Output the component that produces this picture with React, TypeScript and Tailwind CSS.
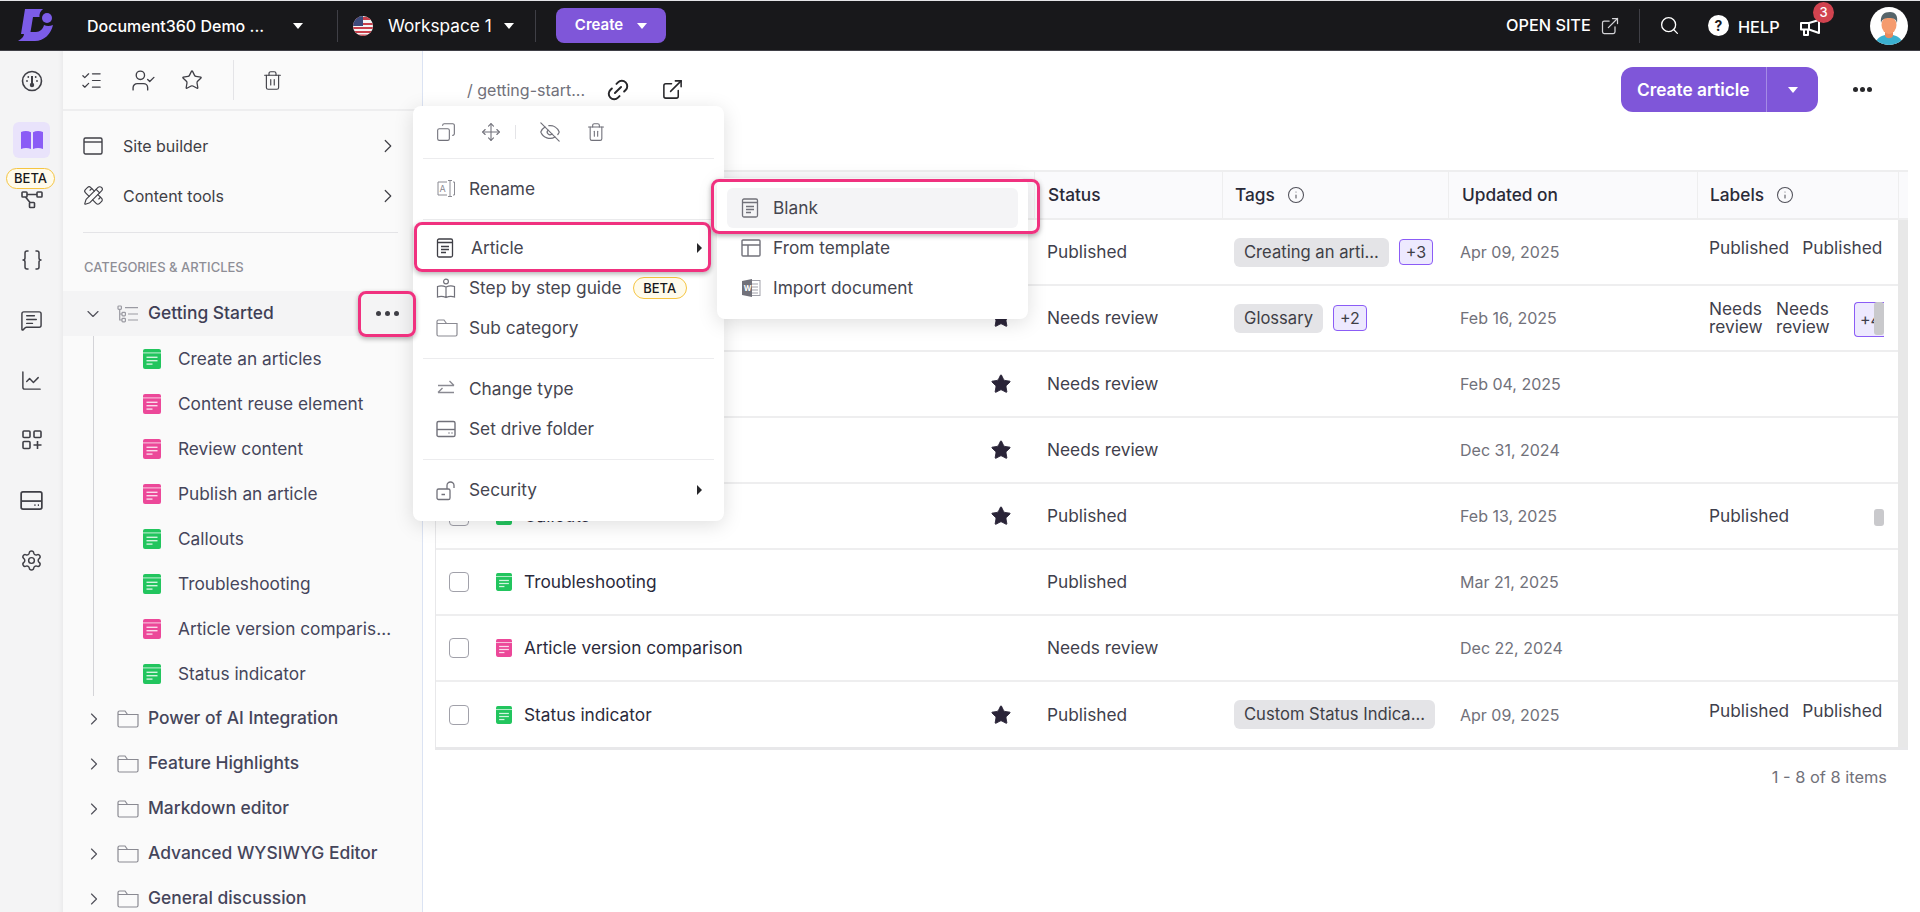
import {
  Braces,
  ChartLine,
  ChevronDown,
  ChevronRight,
  Copy,
  ExternalLink,
  EyeOff,
  Info,
  Link2,
  ListChecks,
  MessageSquareText,
  Move,
  PencilRuler,
  Search,
  Settings,
  Star,
  Trash2,
  UserCheck,
} from "lucide-react";
import type { ReactNode } from "react";

const font = { fontFamily: "Inter, 'Noto Sans', sans-serif" };

const Logo = () => (
  <svg width="36" height="36" viewBox="0 0 36 36" fill="#7c5ce8">
    <path d="M7 1H25Q21 4 21.5 9H15L12.5 24H18C22 24 25 21 26 17Q30 19 35 17C33 26 26 33 17 33H0C4 31 6 28 6 26H3Z" />
    <circle cx="29" cy="10" r="5" />
  </svg>
);

const Flag = () => (
  <svg width="20" height="20" viewBox="0 0 20 20">
    <clipPath id="flag-clip">
      <circle cx="10" cy="10" r="10" />
    </clipPath>
    <g clipPath="url(#flag-clip)">
      <rect width="20" height="20" fill="#f4f4f5" />
      <rect y="1" width="20" height="3" fill="#c8404c" />
      <rect y="7" width="20" height="2" fill="#c8404c" />
      <rect y="11" width="20" height="2" fill="#c8404c" />
      <rect y="15" width="20" height="2" fill="#c8404c" />
      <rect y="18.5" width="20" height="2" fill="#c8404c" />
      <rect width="10" height="10" fill="#3c4a7c" />
    </g>
  </svg>
);

const Avatar = () => (
  <svg width="38" height="38" viewBox="0 0 38 38">
    <clipPath id="avatar-clip">
      <circle cx="19" cy="19" r="19" />
    </clipPath>
    <g clipPath="url(#avatar-clip)">
      <rect width="38" height="38" fill="#fff" />
      <path d="M5 38C6 31 11 29 15 28H23C27 29 32 31 33 38Z" fill="#3bb0d0" />
      <path d="M15 22H23V29C21 32 17 32 15 29Z" fill="#e98a5e" />
      <ellipse cx="19" cy="18" rx="7.5" ry="9" fill="#f59b6e" />
      <path d="M11 16C10 8 14 5 20 5C26 5 28 9 27 16C26 12 24 11 19 11C15 11 12 12 11 16Z" fill="#56656b" />
    </g>
  </svg>
);

const Horn = () => (
  <svg width="21" height="17" viewBox="0 0 21 17" fill="none" stroke="#fff" strokeWidth="2" strokeLinejoin="round">
    <path d="M1 4H9L19 1V14L9 10.5H1Z" />
    <path d="M4 10.5V16H8V10.5M9 4V10.5" />
  </svg>
);

const Caret = ({ className = "border-t-white" }: { className?: string }) => (
  <span className={`inline-block w-0 h-0 border-l-[5px] border-r-[5px] border-t-[6px] border-l-transparent border-r-transparent ${className}`} />
);

const SideCaret = () => (
  <span className="inline-block w-0 h-0 border-t-[5px] border-b-[5px] border-l-[5px] border-t-transparent border-b-transparent border-l-[#27272a]" />
);

const DocIcon = ({ color, w = 18, h = 20 }: { color: string; w?: number; h?: number }) => (
  <svg width={w} height={h} viewBox="0 0 18 20" className="shrink-0">
    <rect width="18" height="20" rx="2" fill={color} />
    <rect y="3.4" width="18" height="1" fill="#fff" opacity="0.75" />
    <rect x="3.5" y="7.6" width="11" height="1.4" fill="#fff" opacity="0.8" />
    <rect x="3.5" y="11" width="11" height="1.4" fill="#fff" opacity="0.8" />
    <rect x="3.5" y="14.4" width="6" height="1.4" fill="#fff" opacity="0.8" />
  </svg>
);

const PlainDoc = ({ color = "#3f3f46" }: { color?: string }) => (
  <svg width="18" height="20" viewBox="0 0 18 20" fill="none" stroke={color} strokeWidth="1.3" className="shrink-0">
    <rect x="1.5" y="1" width="15" height="18" rx="1.5" />
    <path d="M1.5 4.5H16.5M5 8.5H13M5 11.5H13M5 14.5H10" />
  </svg>
);

const FolderIcon = () => (
  <svg width="22" height="18" viewBox="0 0 22 18" fill="none" stroke="#8a8a92" strokeWidth="1.2" className="shrink-0">
    <path d="M1 15.5V2.5A1.5 1.5 0 0 1 2.5 1H8L10.5 4.5H21V15.5A1.5 1.5 0 0 1 19.5 17H2.5A1.5 1.5 0 0 1 1 15.5ZM1 4.5H10.5" />
  </svg>
);

const TreeIcon = () => (
  <svg width="22" height="18" viewBox="0 0 22 18" fill="none" stroke="#9a9aa2" strokeWidth="1.2" className="shrink-0">
    <rect x="1" y="1" width="3.4" height="3.4" rx="0.8" />
    <rect x="5" y="7.4" width="3.4" height="3.4" rx="0.8" />
    <rect x="5" y="13.4" width="3.4" height="3.4" rx="0.8" />
    <path d="M2.7 4.4V15H5M2.7 9H5M8 2.7H21M11 9H21M11 15H21" />
  </svg>
);

const DriveIcon = ({ size = 20, color, width = 1.4 }: { size?: number; color: string; width?: number }) => (
  <svg width={size} height={size} viewBox="0 0 20 20" fill="none" stroke={color} strokeWidth={width} className="shrink-0">
    <rect x="1" y="2.5" width="18" height="15" rx="1.6" />
    <path d="M1 10.5H19" />
    <path d="M12.5 14H13.5M15.5 14H16.5" />
  </svg>
);

const SwapIcon = () => (
  <svg width="20" height="20" viewBox="0 0 20 20" fill="none" stroke="#8a8a92" strokeWidth="1.4" className="shrink-0">
    <path d="M2 6.5H18M13.5 2L18 6.5M18 13.5H2M6.5 9L2 13.5" />
  </svg>
);

const OpenLock = () => (
  <svg width="21" height="21" viewBox="0 0 21 21" fill="none" stroke="#71717a" strokeWidth="1.3" className="shrink-0">
    <rect x="1" y="9" width="13" height="10.5" rx="1.6" />
    <path d="M11 9V5.5A3.4 3.4 0 0 1 18 5.5V8M5.5 14.5H9" />
  </svg>
);

const RailBook = () => (
  <svg width="24" height="20" viewBox="0 0 24 20" fill="#8b5cf6">
    <path d="M1 2C4 .6 8 .6 11 2.2V19C8 17.6 4 17.6 1 19Z" />
    <path d="M23 2C20 .6 16 .6 13 2.2V19C16 17.6 20 17.6 23 19Z" />
  </svg>
);

const RailGauge = () => (
  <svg width="22" height="22" viewBox="0 0 22 22" fill="none" stroke="#3f3f46" strokeWidth="1.6">
    <circle cx="11" cy="11" r="9.5" />
    <path d="M11 6V15" strokeWidth="2" />
    <circle cx="11" cy="15" r="1.4" fill="#3f3f46" />
    <circle cx="6" cy="11" r="0.9" fill="#3f3f46" stroke="none" />
    <circle cx="16" cy="11" r="0.9" fill="#3f3f46" stroke="none" />
    <circle cx="7.3" cy="7" r="0.9" fill="#3f3f46" stroke="none" />
    <circle cx="14.7" cy="7" r="0.9" fill="#3f3f46" stroke="none" />
  </svg>
);

const RailFlow = () => (
  <svg width="22" height="18" viewBox="0 0 22 18" fill="none" stroke="#3f3f46" strokeWidth="1.6">
    <rect x="1" y="1" width="5" height="5" rx="0.8" />
    <rect x="16" y="1" width="5" height="5" rx="0.8" />
    <rect x="8.5" y="11.5" width="5" height="5" rx="0.8" />
    <path d="M6 3.5H16M4.5 6L9 11.5" />
  </svg>
);

const RailGridPlus = () => (
  <svg width="20" height="20" viewBox="0 0 20 20" fill="none" stroke="#3f3f46" strokeWidth="1.6">
    <rect x="1" y="1" width="7" height="6.5" rx="1" />
    <rect x="12" y="1" width="7" height="6.5" rx="1" />
    <rect x="1" y="11.5" width="7" height="7" rx="1" />
    <path d="M15.5 11V19M11.5 15H19.5" />
  </svg>
);

const SiteIcon = () => (
  <svg width="20" height="20" viewBox="0 0 20 20" fill="none" stroke="#3f3f46" strokeWidth="1.4" className="shrink-0">
    <rect x="1" y="2" width="18" height="16" rx="1.5" />
    <path d="M1 6H19" />
  </svg>
);

const RenameIcon = () => (
  <svg width="20" height="20" viewBox="0 0 20 20" fill="none" stroke="#8a8a92" strokeWidth="1" className="shrink-0">
    <path d="M11 3H2V16H11M17 3H18.5V16H17M12 1.5H16M12 17.5H16M14 1.5V17.5" />
    <text x="3.6" y="13" fontSize="9" fill="#8a8a92" stroke="none" fontFamily="Inter, sans-serif">A</text>
  </svg>
);

const GuideIcon = () => (
  <svg width="20" height="21" viewBox="0 0 20 21" fill="none" stroke="#71717a" strokeWidth="1.2" className="shrink-0">
    <circle cx="10" cy="3.5" r="2.4" />
    <path d="M10 9C7 7.5 4 7.5 1.5 8.5V19C4 18 7 18 10 19.5C13 18 16 18 18.5 19V8.5C16 7.5 13 7.5 10 9ZM10 9V19.5" />
  </svg>
);

const WordIcon = () => (
  <svg width="20" height="20" viewBox="0 0 20 20" className="shrink-0">
    <rect x="8" y="2.5" width="11" height="15" fill="#fff" stroke="#a1a1aa" strokeWidth="1" />
    <path d="M11 6H17M11 9H17M11 12H17M11 15H17" stroke="#a1a1aa" strokeWidth="1" />
    <path d="M1 3L11 1V19L1 17Z" fill="#71717a" />
    <text x="2.7" y="12.6" fontSize="7.5" fontWeight="700" fill="#fff" fontFamily="Inter, sans-serif">W</text>
  </svg>
);

const TemplateIcon = () => (
  <svg width="20" height="20" viewBox="0 0 20 20" fill="none" stroke="#71717a" strokeWidth="1.4" className="shrink-0">
    <rect x="1" y="2" width="18" height="16" rx="1" />
    <path d="M1 7H19M7 7V18" />
  </svg>
);

const RailItem = ({ children, className = "h-[60px]" }: { children: ReactNode; className?: string }) => (
  <div className={`flex items-center justify-center relative ${className}`}>{children}</div>
);

const BetaPill = ({ className = "" }: { className?: string }) => (
  <span className={`flex items-center justify-center rounded-full border border-[#f5c542] bg-[#fffbeb] text-[13px] font-medium leading-none text-[#18181b] ${className}`}>
    BETA
  </span>
);

const TopBar = () => (
  <header className="h-[51px] shrink-0 flex items-center bg-[#18181b] border-t border-t-[#e4e4e7] border-b border-b-[#3f3f46] text-white">
    <div className="ml-[18px] w-[69px] shrink-0">
      <Logo />
    </div>
    <span className="w-[206px] text-[16px] font-medium">Document360 Demo ...</span>
    <Caret />
    <span className="ml-[34px] w-px h-[32px] bg-[#3f3f46]" />
    <span className="ml-[15px] w-[35px]">
      <Flag />
    </span>
    <span className="text-[17.2px] w-[116px] whitespace-nowrap">Workspace 1</span>
    <Caret />
    <span className="ml-[21px] w-px h-[32px] bg-[#3f3f46]" />
    <button className="ml-[20px] w-[110px] h-[35px] rounded-[8px] bg-[#7f56d9] flex items-center justify-center gap-[14px] text-[15px] font-semibold">
      Create
      <Caret />
    </button>
    <div className="ml-auto flex items-center">
      <span className="text-[16.3px] font-medium w-[94px] whitespace-nowrap">OPEN SITE</span>
      <ExternalLink size={20} strokeWidth={1.5} className="text-[#d4d4d8]" />
      <span className="ml-[19px] w-px h-[34px] bg-[#3f3f46]" />
      <Search size={21} strokeWidth={1.5} className="ml-[19px]" />
      <span className="ml-[28px] w-[21px] h-[21px] rounded-full bg-white text-[#18181b] flex items-center justify-center text-[14px] font-bold">?</span>
      <span className="ml-[9px] text-[16.3px] font-medium w-[62px] mt-[3px]">HELP</span>
      <span className="relative w-[21px] h-[17px] mt-[4px] block">
        <Horn />
        <span className="absolute left-[13px] top-[-17px] w-[21px] h-[21px] rounded-full bg-[#d1434f] text-[13px] font-medium flex items-center justify-center">3</span>
      </span>
      <span className="ml-[49px] mr-[12px] mt-[1px] block">
        <Avatar />
      </span>
    </div>
  </header>
);

const Rail = () => (
  <aside className="w-[63px] shrink-0 bg-[#f4f4f5] shadow-[inset_-6px_0_6px_-6px_rgba(0,0,0,0.08)]">
    <RailItem className="h-[59px]">
      <RailGauge />
    </RailItem>
    <RailItem>
      <span className="w-[37px] h-[36px] rounded-[6px] bg-[#e9e3fb] flex items-center justify-center">
        <RailBook />
      </span>
    </RailItem>
    <RailItem>
      <RailFlow />
      <BetaPill className="absolute left-[6px] top-[-2px] w-[49px] h-[21px] text-[11px]" />
    </RailItem>
    <RailItem>
      <Braces size={24} strokeWidth={1.5} className="text-[#3f3f46]" />
    </RailItem>
    <RailItem>
      <MessageSquareText size={23} strokeWidth={1.5} className="text-[#3f3f46]" />
    </RailItem>
    <RailItem>
      <ChartLine size={23} strokeWidth={1.5} className="text-[#3f3f46]" />
    </RailItem>
    <RailItem>
      <RailGridPlus />
    </RailItem>
    <RailItem>
      <DriveIcon size={23} color="#3f3f46" width={1.5} />
    </RailItem>
    <RailItem>
      <Settings size={23} strokeWidth={1.5} className="text-[#3f3f46]" />
    </RailItem>
  </aside>
);

const articles = [
  { name: "Create an articles", color: "#22c55e" },
  { name: "Content reuse element", color: "#ec4899" },
  { name: "Review content", color: "#ec4899" },
  { name: "Publish an article", color: "#ec4899" },
  { name: "Callouts", color: "#22c55e" },
  { name: "Troubleshooting", color: "#22c55e" },
  { name: "Article version comparison", color: "#ec4899" },
  { name: "Status indicator", color: "#22c55e" },
];

const folders = ["Power of AI Integration", "Feature Highlights", "Markdown editor", "Advanced WYSIWYG Editor", "General discussion"];

const TreePanel = () => (
  <aside className="w-[360px] shrink-0 bg-[#fafafa] border-r border-r-[#dbe3f3] overflow-hidden">
    <div className="h-[60px] flex items-center border-b-2 border-b-[#eeeeef] text-[#3f3f46]">
      <ListChecks size={23} strokeWidth={1.3} className="ml-[17px]" />
      <UserCheck size={25} strokeWidth={1.3} className="ml-[28px]" />
      <Star size={22} strokeWidth={1.4} className="ml-[25px]" />
      <span className="ml-[30px] w-px h-[40px] bg-[#e4e4e7]" />
      <Trash2 size={21} strokeWidth={1.3} className="ml-[28px]" />
    </div>
    <div className="px-[20px]">
      <div className="h-[50px] mt-[10px] flex items-center text-[16px] text-[#3f3f46]">
        <SiteIcon />
        <span className="ml-[20px]">Site builder</span>
        <ChevronRight size={22} strokeWidth={1.3} className="ml-auto mr-[3px]" />
      </div>
      <div className="h-[50px] flex items-center text-[16px] text-[#3f3f46] pb-[1px]">
        <PencilRuler size={21} strokeWidth={1.3} />
        <span className="ml-[19px]">Content tools</span>
        <ChevronRight size={22} strokeWidth={1.3} className="ml-auto mr-[3px]" />
      </div>
      <div className="mt-[11px] h-px bg-[#e4e4e7] mr-[4px]" />
    </div>
    <div className="pl-[21px] pt-[25px] h-[58px] text-[13px] font-medium text-[#8e8e96]">CATEGORIES &amp; ARTICLES</div>
    <div className="h-[45px] flex items-center bg-[#f4f4f5] text-[17.4px] font-medium text-[#3f3f56]">
      <ChevronDown size={20} strokeWidth={1.4} className="ml-[20px] text-[#52525b]" />
      <span className="ml-[14px]">
        <TreeIcon />
      </span>
      <span className="ml-[9px]">Getting Started</span>
    </div>
    <div className="ml-[30px] border-l border-l-[#d4d4d8]">
      {articles.map((a) => (
        <div key={a.name} className="h-[45px] flex items-center pl-[49px] text-[17.3px] text-[#45455a]">
          <DocIcon color={a.color} />
          <span className="ml-[17px] w-[217px] truncate">{a.name}</span>
        </div>
      ))}
    </div>
    {folders.map((f) => (
      <div key={f} className="h-[45px] flex items-center text-[17.4px] font-medium text-[#45455a]">
        <ChevronRight size={20} strokeWidth={1.4} className="ml-[21px] text-[#52525b]" />
        <span className="ml-[13px]">
          <FolderIcon />
        </span>
        <span className="ml-[9px]">{f}</span>
      </div>
    ))}
  </aside>
);

type Row = {
  name: string;
  color: string;
  star: boolean;
  status: string;
  tags: string[];
  more?: string;
  date: string;
  labels?: ReactNode;
};

const TwoPublished = () => (
  <div className="flex gap-[13px] mb-[8px]">
    <span>Published</span>
    <span>Published</span>
  </div>
);

// names of the first four rows sit behind the open menus
const rows: Row[] = [
  { name: "", color: "#22c55e", star: false, status: "Published", tags: ["Creating an arti..."], more: "+3", date: "Apr 09, 2025", labels: <TwoPublished /> },
  {
    name: "",
    color: "#ec4899",
    star: true,
    status: "Needs review",
    tags: ["Glossary"],
    more: "+2",
    date: "Feb 16, 2025",
    labels: (
      <>
        <div className="flex gap-[13px] leading-[18px]">
          <span className="w-[54px]">Needs review</span>
          <span className="w-[54px]">Needs review</span>
        </div>
        <span className="absolute left-[157px] top-[16px] w-[30px] h-[35px] rounded-l-[4px] border border-[#8b5cf6] border-r-0 bg-[#ede9fe] text-[16px] flex items-center pl-[5px] overflow-hidden">+4</span>
        <span className="absolute left-[177px] top-[16px] w-[10px] h-[33px] rounded-[3px] bg-[#c9c9cc]" />
      </>
    ),
  },
  { name: "", color: "#ec4899", star: true, status: "Needs review", tags: [], date: "Feb 04, 2025" },
  { name: "", color: "#ec4899", star: true, status: "Needs review", tags: [], date: "Dec 31, 2024" },
  {
    name: "Callouts",
    color: "#22c55e",
    star: true,
    status: "Published",
    tags: [],
    date: "Feb 13, 2025",
    labels: (
      <>
        <span>Published</span>
        <span className="absolute left-[177px] top-[25px] w-[10px] h-[17px] rounded-[3px] bg-[#c9c9cc]" />
      </>
    ),
  },
  { name: "Troubleshooting", color: "#22c55e", star: false, status: "Published", tags: [], date: "Mar 21, 2025" },
  { name: "Article version comparison", color: "#ec4899", star: false, status: "Needs review", tags: [], date: "Dec 22, 2024" },
  { name: "Status indicator", color: "#22c55e", star: true, status: "Published", tags: ["Custom Status Indica..."], date: "Apr 09, 2025", labels: <TwoPublished /> },
];

const gridCols = "grid grid-cols-[598px_188px_226px_249px_201px]";

const ArticlesTable = () => (
  <div className="mx-[12px] w-[1473px] border-l border-l-[#e8e8ea] border-t-2 border-t-[#eeeeef] border-b-[3px] border-b-[#e8e8ea]">
    <div className="flex h-[48px] bg-[#fafafc] border-b-2 border-b-[#eeeeef] text-[17.3px] font-medium text-[#2a2a38]">
      <div className={`${gridCols} w-[1462px]`}>
        <div />
        <div className="flex items-center pl-[13px] border-l border-l-[#eeeeef]">Status</div>
        <div className="flex items-center pl-[12px] gap-[12px] border-l border-l-[#eeeeef]">
          Tags
          <Info size={18} strokeWidth={1.4} className="text-[#52525b]" />
        </div>
        <div className="flex items-center pl-[13px] border-l border-l-[#eeeeef]">Updated on</div>
        <div className="flex items-center pl-[12px] gap-[12px] border-l border-l-[#eeeeef]">
          Labels
          <Info size={18} strokeWidth={1.4} className="text-[#52525b]" />
        </div>
      </div>
      <div className="w-[11px] border-l border-l-[#eeeeef]" />
    </div>
    <div className="flex">
      <div className="w-[1462px]">
        {rows.map((r, i) => (
          <div key={i} className={`${gridCols} ${i < rows.length - 1 ? "h-[66px] border-b-2 border-b-[#eeeeef]" : "h-[65px]"}`}>
            <div className="flex items-center pl-[13px]">
              <span className="w-[20px] h-[20px] rounded-[4px] border border-[#a1a1aa] bg-white shrink-0" />
              <span className="ml-[27px]">
                <DocIcon color={r.color} w={16} h={18} />
              </span>
              <span className="ml-[12px] text-[17.3px] text-[#2a2a3c] flex-1">{r.name}</span>
              {r.star && <Star size={22} fill="#2a2438" strokeWidth={1} className="text-[#2a2438] mr-[22px]" />}
            </div>
            <div className="flex items-center pl-[13px] text-[17.3px] text-[#3f3f4c]">{r.status}</div>
            <div className="flex items-center pl-[12px] gap-[10px]">
              {r.tags.map((t) => (
                <span key={t} className="h-[29px] px-[10px] rounded-[6px] bg-[#e4e4e7] text-[16.6px] text-[#3f3f46] flex items-center whitespace-nowrap">
                  {t}
                </span>
              ))}
              {r.more && (
                <span className="h-[26px] px-[6px] rounded-[4px] border border-[#8b5cf6] bg-[#ede9fe] text-[16px] text-[#3f3f46] flex items-center">{r.more}</span>
              )}
            </div>
            <div className="flex items-center pl-[12px] text-[16px] text-[#71717a]">{r.date}</div>
            <div className="relative flex flex-col justify-center pl-[12px] text-[17.3px] text-[#3f3f4c] overflow-hidden">{r.labels}</div>
          </div>
        ))}
      </div>
      <div className="w-[11px] bg-[#e8e8e8]" />
    </div>
  </div>
);

const Main = () => (
  <main className="flex-1 min-w-0 bg-white">
    <div className="h-[119px] pt-[16px] flex items-start">
      <div className="h-[45px] pl-[44px] flex items-center text-[#3f3f46]">
        <span className="w-[138px] text-[16px] text-[#71717a] whitespace-nowrap">/ getting-start...</span>
        <Link2 size={26} strokeWidth={1.8} className="-rotate-45 text-[#27272a]" />
        <ExternalLink size={23} strokeWidth={1.6} className="ml-[30px] text-[#27272a]" />
      </div>
      <div className="ml-auto flex items-center h-[45px]">
        <div className="w-[197px] h-[45px] rounded-[12px] bg-[#7f56d9] flex items-center text-white">
          <span className="w-[145px] pl-[16px] text-[17.3px] font-semibold whitespace-nowrap">Create article</span>
          <span className="w-px h-full bg-[#a58be5]" />
          <span className="flex-1 flex justify-center">
            <Caret />
          </span>
        </div>
        <span className="ml-[35px] mr-[48px] flex gap-[2px]">
          <span className="w-[5px] h-[5px] rounded-full bg-[#27272a]" />
          <span className="w-[5px] h-[5px] rounded-full bg-[#27272a]" />
          <span className="w-[5px] h-[5px] rounded-full bg-[#27272a]" />
        </span>
      </div>
    </div>
    <ArticlesTable />
    <div className="mt-[15px] w-[1464px] text-right text-[16.4px] text-[#71717a]">1 - 8 of 8 items</div>
  </main>
);

const MenuRow = ({ icon, children, right }: { icon: ReactNode; children: ReactNode; right?: ReactNode }) => (
  <div className="h-[40px] flex items-center px-[23px] text-[17.3px] text-[#45454f]">
    <span className="w-[33px] flex items-center shrink-0">{icon}</span>
    {children}
    {right && <span className="ml-auto mr-[-1px] flex">{right}</span>}
  </div>
);

const MenuLine = () => <div className="mx-[10px] h-px bg-[#ececee]" />;

const ContextMenu = () => (
  <div className="absolute left-[413px] top-[106px] w-[311px] h-[415px] rounded-[8px] bg-white shadow-[0_4px_20px_rgba(0,0,0,0.13)] z-10">
    <div className="h-[52px] flex items-center text-[#71717a]">
      <Copy size={20} strokeWidth={1.3} className="ml-[23px] -scale-x-100" />
      <Move size={20} strokeWidth={1.3} className="ml-[25px]" />
      <span className="ml-[14px] w-px h-[14px] bg-[#e4e4e7]" />
      <EyeOff size={22} strokeWidth={1.3} className="ml-[23px]" />
      <Trash2 size={20} strokeWidth={1.3} className="ml-[25px]" />
    </div>
    <MenuLine />
    <div className="py-[10px]">
      <MenuRow icon={<RenameIcon />}>Rename</MenuRow>
    </div>
    <MenuLine />
    <div className="py-[8px] pb-[10px]">
      <MenuRow icon={<PlainDoc />} right={<SideCaret />}>
        <span className="ml-[2px]">Article</span>
      </MenuRow>
      <MenuRow icon={<GuideIcon />}>
        Step by step guide
        <BetaPill className="ml-[11px] w-[54px] h-[22px]" />
      </MenuRow>
      <MenuRow icon={<FolderIcon />}>Sub category</MenuRow>
    </div>
    <MenuLine />
    <div className="py-[10px]">
      <MenuRow icon={<SwapIcon />}>Change type</MenuRow>
      <MenuRow icon={<DriveIcon color="#71717a" />}>Set drive folder</MenuRow>
    </div>
    <MenuLine />
    <div className="pt-[10px]">
      <MenuRow icon={<OpenLock />} right={<SideCaret />}>
        Security
      </MenuRow>
    </div>
  </div>
);

const SubMenu = () => (
  <div className="absolute left-[717px] top-[178px] w-[311px] h-[141px] p-[10px] rounded-[8px] bg-white shadow-[0_4px_20px_rgba(0,0,0,0.13)] z-10 text-[17.3px] text-[#45454f]">
    <div className="h-[40px] flex items-center pl-[14px] gap-[14px] rounded-[6px] bg-[#f4f4f6]">
      <span className="w-[18px] flex">
        <PlainDoc color="#71717a" />
      </span>
      Blank
    </div>
    <div className="h-[40px] flex items-center pl-[14px] gap-[14px]">
      <span className="w-[18px] flex">
        <TemplateIcon />
      </span>
      From template
    </div>
    <div className="h-[40px] flex items-center pl-[14px] gap-[14px]">
      <span className="w-[18px] flex">
        <WordIcon />
      </span>
      Import document
    </div>
  </div>
);

// pink callouts drawn over the screenshot
const Callout = ({ className }: { className: string }) => (
  <div className={`absolute z-20 rounded-[8px] border-[3px] border-[#f0317f] shadow-[0_2px_5px_rgba(0,0,0,0.3)] ${className}`} />
);

export default function App() {
  return (
    <div className="relative h-[912px] w-[1920px] overflow-hidden flex flex-col bg-white" style={font}>
      <TopBar />
      <div className="flex flex-1 min-h-0">
        <Rail />
        <TreePanel />
        <Main />
      </div>
      <ContextMenu />
      <SubMenu />
      <div className="absolute z-20 left-[368px] top-[294px] w-[38px] h-[38px] flex items-center justify-center gap-[4px]">
        <span className="w-[5px] h-[5px] rounded-full bg-[#3f3f46]" />
        <span className="w-[5px] h-[5px] rounded-full bg-[#3f3f46]" />
        <span className="w-[5px] h-[5px] rounded-full bg-[#3f3f46]" />
      </div>
      <Callout className="left-[358px] top-[291px] w-[58px] h-[46px]" />
      <Callout className="left-[414px] top-[222px] w-[297px] h-[50px]" />
      <Callout className="left-[711px] top-[179px] w-[329px] h-[55px]" />
    </div>
  );
}
